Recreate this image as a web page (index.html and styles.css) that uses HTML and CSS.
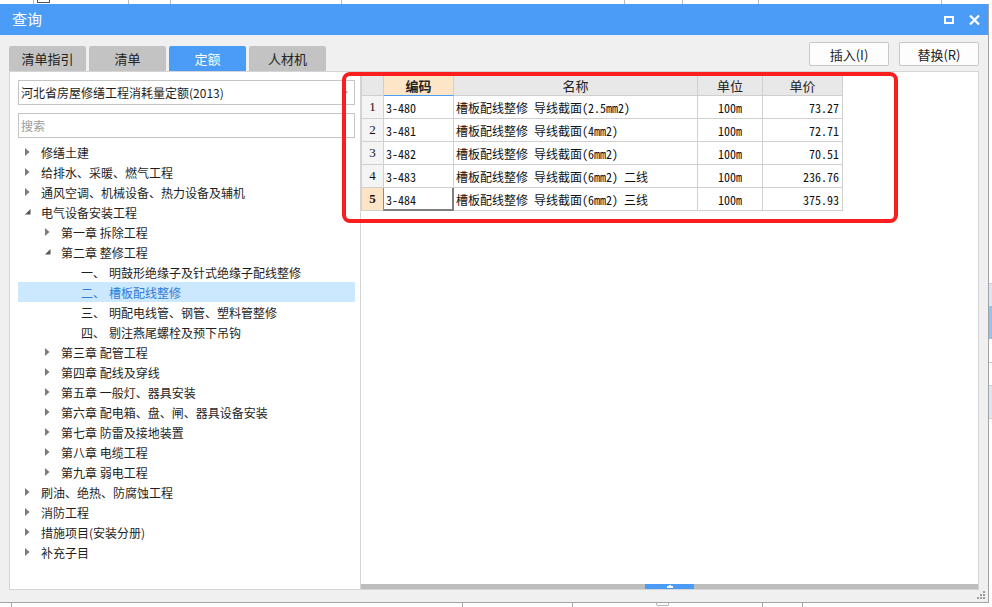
FILE: index.html
```html
<!DOCTYPE html>
<html lang="zh-CN">
<head>
<meta charset="utf-8">
<title>查询</title>
<link rel="stylesheet" href="styles.css">
</head>
<body>
<div class="bg-top">
  <div class="bt c1"></div><div class="bt c2"><span class="chk"></span></div><div class="bt c3"></div><div class="bt c4"></div><div class="bt c5"></div><div class="bt c6"></div><div class="bt c7"></div><div class="bt c8"></div><div class="bt c9"></div>
</div>
<div class="mid">
  <div class="dialog">
    <div class="titlebar">
      <span class="title">查询</span>
      <div class="winbtns">
        <svg class="ico-max" width="10" height="8" viewBox="0 0 10 8"><rect x="1" y="1" width="8" height="6" fill="none" stroke="#fff" stroke-width="2"/></svg>
        <svg class="ico-close" width="11" height="10" viewBox="0 0 11 10"><path d="M1 0.5 L10 9.5 M10 0.5 L1 9.5" stroke="#fff" stroke-width="2.2" fill="none"/></svg>
      </div>
    </div>
    <div class="dlg-body">
      <div class="toolbar">
        <div class="tabs">
          <div class="tab">清单指引</div>
          <div class="tab">清单</div>
          <div class="tab active">定额</div>
          <div class="tab">人材机</div>
        </div>
        <div class="btns">
          <div class="btn">插入(I)</div>
          <div class="btn">替换(R)</div>
        </div>
      </div>
      <div class="panels">
        <div class="left">
          <div class="select">
            <span class="sel-text">河北省房屋修缮工程消耗量定额(2013)</span>
            <svg class="sel-arrow" width="6" height="4" viewBox="0 0 6 4"><path d="M0 0.5 H6 L3 3.5 Z" fill="#7a7a7a"/></svg>
          </div>
          <div class="search">搜索</div>
          <div class="tree">
            <div class="row l0"><span class="tg"><svg width="5" height="8" viewBox="0 0 5 8"><path d="M0 0 L4.5 4 L0 8 Z" fill="#7b7b7b"/></svg></span>修缮土建</div>
            <div class="row l0"><span class="tg"><svg width="5" height="8" viewBox="0 0 5 8"><path d="M0 0 L4.5 4 L0 8 Z" fill="#7b7b7b"/></svg></span>给排水、采暖、燃气工程</div>
            <div class="row l0"><span class="tg"><svg width="5" height="8" viewBox="0 0 5 8"><path d="M0 0 L4.5 4 L0 8 Z" fill="#7b7b7b"/></svg></span>通风空调、机械设备、热力设备及辅机</div>
            <div class="row l0"><span class="tg"><svg width="6" height="6" viewBox="0 0 6 6"><path d="M5.5 0 L5.5 5.5 L0 5.5 Z" fill="#555"/></svg></span>电气设备安装工程</div>
            <div class="row l1"><span class="tg"><svg width="5" height="8" viewBox="0 0 5 8"><path d="M0 0 L4.5 4 L0 8 Z" fill="#7b7b7b"/></svg></span>第一章 拆除工程</div>
            <div class="row l1"><span class="tg"><svg width="6" height="6" viewBox="0 0 6 6"><path d="M5.5 0 L5.5 5.5 L0 5.5 Z" fill="#555"/></svg></span>第二章 整修工程</div>
            <div class="row l2"><span class="num">一、</span>明鼓形绝缘子及针式绝缘子配线整修</div>
            <div class="row l2 selected"><span class="num">二、</span>槽板配线整修</div>
            <div class="row l2"><span class="num">三、</span>明配电线管、钢管、塑料管整修</div>
            <div class="row l2"><span class="num">四、</span>剔注燕尾螺栓及预下吊钩</div>
            <div class="row l1"><span class="tg"><svg width="5" height="8" viewBox="0 0 5 8"><path d="M0 0 L4.5 4 L0 8 Z" fill="#7b7b7b"/></svg></span>第三章 配管工程</div>
            <div class="row l1"><span class="tg"><svg width="5" height="8" viewBox="0 0 5 8"><path d="M0 0 L4.5 4 L0 8 Z" fill="#7b7b7b"/></svg></span>第四章 配线及穿线</div>
            <div class="row l1"><span class="tg"><svg width="5" height="8" viewBox="0 0 5 8"><path d="M0 0 L4.5 4 L0 8 Z" fill="#7b7b7b"/></svg></span>第五章 一般灯、器具安装</div>
            <div class="row l1"><span class="tg"><svg width="5" height="8" viewBox="0 0 5 8"><path d="M0 0 L4.5 4 L0 8 Z" fill="#7b7b7b"/></svg></span>第六章 配电箱、盘、闸、器具设备安装</div>
            <div class="row l1"><span class="tg"><svg width="5" height="8" viewBox="0 0 5 8"><path d="M0 0 L4.5 4 L0 8 Z" fill="#7b7b7b"/></svg></span>第七章 防雷及接地装置</div>
            <div class="row l1"><span class="tg"><svg width="5" height="8" viewBox="0 0 5 8"><path d="M0 0 L4.5 4 L0 8 Z" fill="#7b7b7b"/></svg></span>第八章 电缆工程</div>
            <div class="row l1"><span class="tg"><svg width="5" height="8" viewBox="0 0 5 8"><path d="M0 0 L4.5 4 L0 8 Z" fill="#7b7b7b"/></svg></span>第九章 弱电工程</div>
            <div class="row l0"><span class="tg"><svg width="5" height="8" viewBox="0 0 5 8"><path d="M0 0 L4.5 4 L0 8 Z" fill="#7b7b7b"/></svg></span>刷油、绝热、防腐蚀工程</div>
            <div class="row l0"><span class="tg"><svg width="5" height="8" viewBox="0 0 5 8"><path d="M0 0 L4.5 4 L0 8 Z" fill="#7b7b7b"/></svg></span>消防工程</div>
            <div class="row l0"><span class="tg"><svg width="5" height="8" viewBox="0 0 5 8"><path d="M0 0 L4.5 4 L0 8 Z" fill="#7b7b7b"/></svg></span>措施项目(安装分册)</div>
            <div class="row l0"><span class="tg"><svg width="5" height="8" viewBox="0 0 5 8"><path d="M0 0 L4.5 4 L0 8 Z" fill="#7b7b7b"/></svg></span>补充子目</div>
          </div>
        </div>
        <div class="right">
          <div class="grid-wrap">
            <div class="grid">
              <div class="c h"></div>
              <div class="c h code">编码</div>
              <div class="c h">名称</div>
              <div class="c h">单位</div>
              <div class="c h">单价</div>

              <div class="c rn">1</div>
              <div class="c tx">3-480</div>
              <div class="c tx">槽板配线整修 导线截面(2.5mm2)</div>
              <div class="c ct">100m</div>
              <div class="c rt">73.27</div>

              <div class="c rn">2</div>
              <div class="c tx">3-481</div>
              <div class="c tx">槽板配线整修 导线截面(4mm2)</div>
              <div class="c ct">100m</div>
              <div class="c rt">72.71</div>

              <div class="c rn">3</div>
              <div class="c tx">3-482</div>
              <div class="c tx">槽板配线整修 导线截面(6mm2)</div>
              <div class="c ct">100m</div>
              <div class="c rt">70.51</div>

              <div class="c rn">4</div>
              <div class="c tx">3-483</div>
              <div class="c tx">槽板配线整修 导线截面(6mm2) 二线</div>
              <div class="c ct">100m</div>
              <div class="c rt">236.76</div>

              <div class="c rn sel">5</div>
              <div class="c tx cur">3-484</div>
              <div class="c tx">槽板配线整修 导线截面(6mm2) 三线</div>
              <div class="c ct">100m</div>
              <div class="c rt">375.93</div>
            </div>
          </div>
          <div class="hbar">
            <div class="handle"><svg width="6" height="3" viewBox="0 0 6 3"><rect x="2" y="0" width="2" height="1" fill="#fff"/><rect x="0" y="1" width="6" height="2" fill="#fff"/></svg></div>
          </div>
        </div>
      </div>
      <div class="footer">
        <svg width="9" height="9" viewBox="0 0 9 9"><g fill="#9c9c9c"><rect x="6" y="0" width="2" height="2"/><rect x="3" y="3" width="2" height="2"/><rect x="6" y="3" width="2" height="2"/><rect x="0" y="6" width="2" height="2"/><rect x="3" y="6" width="2" height="2"/><rect x="6" y="6" width="2" height="2"/></g></svg>
      </div>
    </div>
  </div>
  <div class="bg-right"></div>
</div>
<div class="bg-bottom">
  <div class="bb b1"></div><div class="bb b2"></div><div class="bb b3"></div><div class="bb b4"><span class="pill"></span></div><div class="bb b5"></div>
</div>
<div class="annot"></div>
</body>
</html>
```

FILE: styles.css
```css
html, body {
  margin: 0;
  padding: 0;
}
body {
  width: 992px;
  height: 607px;
  overflow: hidden;
  position: relative;
  background: #fff;
  font-family: "Noto Sans CJK SC", "Noto Sans", sans-serif;
  color: #1e1e1e;
}

/* background spreadsheet fragments */
.bg-top {
  height: 4px;
  display: flex;
  overflow: hidden;
  background: #fff;
}
.bt {
  box-sizing: border-box;
  height: 4px;
  border-right: 1px solid #b8b8b8;
  flex: none;
}
.c1 { width: 34px; }
.c2 { width: 95px; position: relative; }
.c3 { width: 42px; }
.c4 { width: 171px; }
.c5 { width: 283px; }
.c6 { width: 58px; }
.c7 { width: 76px; }
.c8 { width: 183px; }
.c9 { width: 50px; border-right: none; }
.chk {
  display: block;
  width: 13px;
  height: 3px;
  margin-left: 3px;
  box-sizing: border-box;
  border: 1px solid #555;
  border-top: none;
}

.mid {
  display: flex;
  height: 599px;
}
.bg-right {
  flex: 1;
  background: linear-gradient(to bottom,
    #fff 0 279px, #cfcfcf 279px 280px, #dce6f4 280px 302px,
    #90c2f2 302px 335px, #fff 335px 358px, #c8c8c8 358px 359px,
    #fff 359px 381px, #cfcfcf 381px 382px, #dce6f4 382px 414px,
    #cfcfcf 414px 415px, #fff 415px);
}
.bg-bottom {
  height: 4px;
  display: flex;
  background: #fff;
}
.bb {
  box-sizing: border-box;
  height: 4px;
  border-right: 1px solid #a8a8a8;
  flex: none;
}
.b1 { width: 12px; }
.b2 { width: 451px; }
.b3 { width: 110px; }
.b4 { width: 190px; position: relative; }
.b5 { width: 40px; }
.pill {
  display: block;
  width: 13px;
  height: 3px;
  margin-left: 83px;
  box-sizing: border-box;
  border: 1px solid #b5b5b5;
  border-top: none;
  border-radius: 0 0 2px 2px;
}

/* dialog */
.dialog {
  width: 989px;
  height: 599px;
  flex: none;
  box-sizing: border-box;
  border-right: 1px solid #a3a3a3;
  border-bottom: 1px solid #a3a3a3;
  background: #f0f0f0;
  display: flex;
  flex-direction: column;
}
.titlebar {
  height: 31px;
  flex: none;
  background: #4a9cf7;
  display: flex;
  align-items: center;
  padding: 0 8px 0 12px;
  color: #fff;
}
.title {
  font-size: 15px;
  line-height: 20px;
  margin-top: -1px;
}
.winbtns {
  margin-left: auto;
  display: flex;
  align-items: center;
  gap: 15px;
  margin-top: 1px;
}
.ico-max, .ico-close { display: block; }

.dlg-body {
  flex: 1;
  display: flex;
  flex-direction: column;
  padding: 7px 9px 0 9px;
}
.toolbar {
  height: 29px;
  flex: none;
  display: flex;
}
.tabs {
  display: flex;
  gap: 3px;
  align-self: flex-end;
}
.tab {
  width: 77px;
  height: 25px;
  background: #c3c3c3;
  color: #222;
  font-size: 13px;
  display: flex;
  align-items: center;
  justify-content: center;
  border-radius: 2px 2px 0 0;
}
.tab.active {
  background: #4a9cf7;
  color: #fff;
}
.btns {
  margin-left: auto;
  display: flex;
  gap: 10px;
  align-self: flex-start;
}
.btn {
  width: 80px;
  height: 24px;
  box-sizing: border-box;
  border: 1px solid #c8c8c8;
  border-radius: 2px;
  background: #fdfdfd;
  font-size: 13px;
  color: #222;
  display: flex;
  align-items: center;
  justify-content: center;
}

.panels {
  height: 519px;
  flex: none;
  display: flex;
}
.left {
  width: 352px;
  box-sizing: border-box;
  border: 1px solid #d5d5d5;
  background: #fff;
  padding: 8px 5px 0 8px;
  display: flex;
  flex-direction: column;
}
.right {
  width: 618px;
  box-sizing: border-box;
  border: 1px solid #d5d5d5;
  border-left: none;
  background: #fff;
  display: flex;
  flex-direction: column;
}

.select, .search {
  height: 25px;
  flex: none;
  box-sizing: border-box;
  border: 1px solid #c4c4c4;
  background: #fff;
  display: flex;
  align-items: center;
  padding: 0 6px 0 2px;
  font-size: 12px;
}
.sel-text { color: #1e1e1e; }
.sel-arrow { margin-left: auto; display: block; }
.search {
  margin-top: 8px;
  color: #9b9b9b;
}
.tree {
  margin-top: 4px;
}
.row {
  height: 20px;
  display: flex;
  align-items: center;
  font-size: 12px;
  color: #1e1e1e;
  white-space: nowrap;
}
.row.l0 { padding-left: 7px; }
.row.l1 { padding-left: 27px; }
.row.l2 { padding-left: 63px; }
.tg {
  width: 16px;
  flex: none;
  display: flex;
  align-items: center;
}
.tg svg { display: block; }
.num { margin-right: 4px; }
.row.selected {
  background: #cce8ff;
  color: #2f7ad6;
}

/* grid */
.grid-wrap {
  flex: 1;
  padding-top: 3px;
}
.grid {
  display: grid;
  grid-template-columns: 22px 70px 244px 65px 80px;
  grid-template-rows: 20px repeat(5, 23px);
  width: max-content;
  border-left: 1px solid #d0d0d0;
  border-top: 1px solid #d0d0d0;
}
.c {
  box-sizing: border-box;
  border-right: 1px solid #d0d0d0;
  border-bottom: 1px solid #d0d0d0;
  display: flex;
  align-items: center;
  overflow: hidden;
  white-space: nowrap;
  font-family: "Noto Sans Mono CJK SC", "Liberation Mono", "Noto Sans CJK SC", monospace;
  font-size: 12px;
  color: #111;
}
.h {
  background: #e8e8e8;
  justify-content: center;
  font-family: "Noto Sans CJK SC", sans-serif;
  font-size: 13px;
  color: #222;
}
.h.code {
  background: #fde6c8;
  font-weight: bold;
  border-bottom-color: #4a9cf7;
}
.rn {
  background: #f4f4f4;
  justify-content: center;
  font-family: "Liberation Serif", "Noto Sans CJK SC", serif;
  font-size: 13px;
}
.rn.sel {
  background: #fde4c4;
  font-weight: bold;
}
.tx { padding-left: 2px; }
.ct { justify-content: center; }
.rt { justify-content: flex-end; padding-right: 3px; }
.cur {
  border-right: 2px solid #7f7f7f;
  border-bottom: 2px solid #7f7f7f;
  box-shadow: -1px 0 0 #4a9cf7;
  padding-top: 1px;
}

.hbar {
  height: 5px;
  flex: none;
  background: #bdbdbd;
  display: flex;
  justify-content: center;
}
.handle {
  width: 49px;
  background: #4a9cf7;
  display: flex;
  align-items: center;
  justify-content: center;
}
.handle svg { display: block; }

.footer {
  flex: 1;
  display: flex;
  justify-content: flex-end;
  align-items: flex-start;
  margin-right: -7px;
  padding-top: 1px;
}
.footer svg { display: block; }

/* annotation overlay */
.annot {
  position: absolute;
  left: 342px;
  top: 72px;
  width: 556px;
  height: 151px;
  box-sizing: border-box;
  border: 4px solid #fa1e1e;
  border-radius: 8px;
  pointer-events: none;
}
```
